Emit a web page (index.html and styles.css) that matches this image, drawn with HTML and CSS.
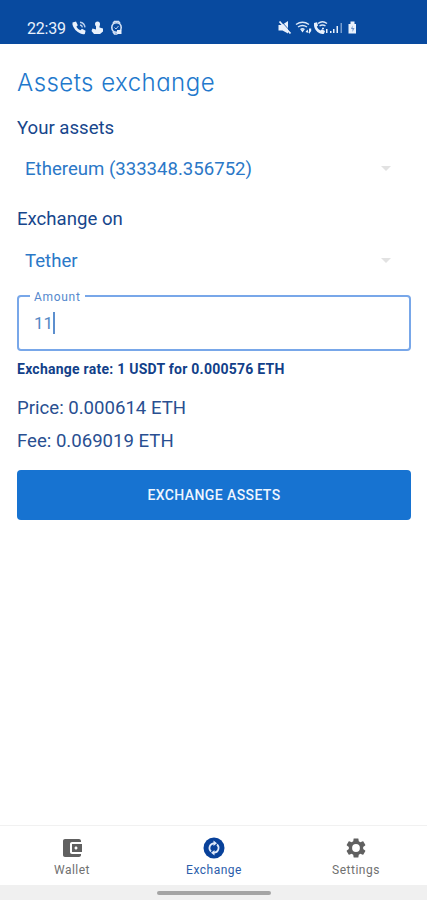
FILE: index.html
```html
<!DOCTYPE html>
<html lang="en">
<head>
<meta charset="utf-8">
<title>Assets exchange</title>
<link rel="stylesheet" href="styles.css">
</head>
<body>
<div class="app">
  <header class="status">
    <span class="clock">22:39</span>
    <svg class="status-left" width="52" height="16" viewBox="0 0 52 16" fill="#e9f1fc">
      <path d="M.5 2.500 4 1.500 5.800 5.200 4.400 6.800Q5.600 9.200 8.400 10.200L10 8.800 13.600 10.800 12.800 14Q11 14.800 8.400 13.500Q2 10.500.5 4.800Z"/>
      <path d="M8 2.200Q12.500 2.800 13 7.400M8 5Q10 5.200 10.400 7.300" fill="none" stroke="#b9cfee" stroke-width="1.400"/>
      <circle cx="25.500" cy="4" r="2.500"/><path d="M24 4h3.500v3.500l3.500 1v3L28 14h-6l-2.500-3 1-2.500 3.500 1z"/>
      <path d="M41 3.500 42.500 1.500h4l1.500 2M41 11.500l1.500 2.500h3" fill="none" stroke="#d3e1f5" stroke-width="1.600"/>
      <circle cx="44.500" cy="7.500" r="4.700" fill="none" stroke="#d3e1f5" stroke-width="1.600"/>
      <path d="M42.500 7.500l1.500 1.500 2.500-3" fill="none" stroke="#b9cfee"/><path d="M45 10h4.500v4H45z"/>
    </svg>
    <svg class="status-right" width="82" height="16" viewBox="0 0 82 16" fill="#e9f1fc">
      <path d="M.5 5H4l6-4v12.500L4.500 10.500H.5z"/><path d="M1.500 1.500l11 12" stroke="#e9f1fc" stroke-width="1.800"/><path d="M4 2l8.500 9.500" stroke="#084a9f" stroke-width=".8"/>
      <g fill="none" stroke="#dce8f8" stroke-width="1.500"><path d="M18 4.500Q24.500 0 31 4.500M20 7Q24.500 4 29 7M22.500 9.500Q24.500 8 26.500 9.500"/></g>
      <path d="M22.500 9.500l2 3 2-3zM27.500 12l2-2.500 1.200 3.500zM31 8.500h2.200v2.500l-2.200 3z"/>
      <path d="M36 3l3-.7 1 3.200-1.200 1.200Q40 9.300 42.500 10.500l1.500-1.200 3 1.700-1 2.700Q43 14.500 39.500 12Q35.500 8.500 36 3z"/>
      <path d="M40 3.500Q44.500 0 49 3.500M41.500 6q3-2 6 0M44 8.500h2" fill="none" stroke="#dce8f8" stroke-width="1.500"/>
      <path d="M48 9h1.500v4H48zM52 11h1.500v2H52zM55 9h1.500v4H55zM58.500 6H60v7h-1.500z"/><path d="M62.500 3H64v10h-1.500z" fill="#769cce"/>
      <path d="M72.500 1.500h4v2.500H78v9.500h-7.500V4h2z"/><path d="M74.500 5.500 73 9h1.500v3l2-4h-2z" fill="#6e94c9"/>
    </svg>
  </header>
  <main class="content">
    <h1 class="title">Assets exchange</h1>
    <div class="label">Your assets</div>
    <div class="select"><span>Ethereum (333348.356752)</span><i class="caret"></i></div>
    <div class="label second">Exchange on</div>
    <div class="select"><span>Tether</span><i class="caret"></i></div>
    <div class="field"><span class="legend">Amount</span><span class="value">11</span><i class="cursor"></i></div>
    <div class="rate">Exchange rate: 1 USDT for 0.000576 ETH</div>
    <div class="price">Price: 0.000614 ETH</div>
    <div class="price fee">Fee: 0.069019 ETH</div>
    <button class="action">EXCHANGE ASSETS</button>
  </main>
  <nav class="tabs">
    <div class="tab">
      <svg width="24" height="24" viewBox="0 0 24 24" fill="#606060"><path d="M21 18v1c0 1.100-.9 2-2 2H5c-1.110 0-2-.9-2-2V5c0-1.100.89-2 2-2h14c1.100 0 2 .9 2 2v1h-9c-1.110 0-2 .9-2 2v8c0 1.100.89 2 2 2h9zm-9-2h10V8H12v8zm4-2.500c-.83 0-1.500-.67-1.500-1.500s.67-1.500 1.500-1.500 1.500.67 1.500 1.500-.67 1.500-1.500 1.500z"/></svg>
      <span>Wallet</span>
    </div>
    <div class="tab active">
      <svg width="24" height="24" viewBox="0 0 24 24"><circle cx="12" cy="12" r="10.500" fill="#08419a"/><g fill="none" stroke="#dfe9fa" stroke-width="1.700"><path d="M9 15.500A4.700 4.700 0 0 1 12 7.300M15 8.500A4.700 4.700 0 0 1 12 16.700"/></g><path d="M11.500 4.500v5.500l3.500-2.700zM12.500 19.500V14L9 16.700z" fill="#dfe9fa"/></svg>
      <span>Exchange</span>
    </div>
    <div class="tab">
      <svg width="24" height="24" viewBox="0 0 24 24" fill="#606060"><path d="M19.140 12.940c.04-.3.060-.61.060-.94 0-.32-.02-.64-.07-.94l2.030-1.580c.18-.14.230-.41.120-.61l-1.920-3.320c-.12-.22-.37-.29-.59-.22l-2.390.96c-.5-.38-1.030-.7-1.620-.94l-.36-2.540c-.04-.24-.24-.41-.48-.41h-3.840c-.24 0-.43.170-.47.410l-.36 2.540c-.59.240-1.130.570-1.620.94l-2.390-.96c-.22-.08-.47 0-.59.220L2.740 8.870c-.12.210-.08.470.12.610l2.030 1.580c-.05.300-.09.630-.09.940s.02.640.07.940l-2.030 1.580c-.18.140-.23.410-.12.610l1.920 3.320c.12.220.37.290.59.220l2.390-.96c.5.380 1.030.7 1.620.94l.36 2.540c.05.240.24.410.48.410h3.840c.24 0 .44-.17.470-.41l.36-2.540c.59-.24 1.130-.56 1.620-.94l2.390.96c.22.080.47 0 .59-.22l1.920-3.320c.12-.22.070-.47-.12-.61l-2.010-1.580zM12 15.900A3.900 3.900 0 1 1 12 8.100a3.900 3.900 0 0 1 0 7.800z"/></svg>
      <span>Settings</span>
    </div>
  </nav>
  <footer class="gesture"><i class="handle"></i></footer>
</div>
</body>
</html>
```
FILE: styles.css
```css
* { box-sizing: border-box; }
body { margin: 0; background: #fff; font-family: Roboto, sans-serif; }
.app { width: 427px; height: 900px; display: flex; flex-direction: column; overflow: hidden; }
.status { height: 44px; flex: none; background: #084a9f; color: #e9f1fc; display: flex; align-items: flex-start; padding: 20px 0 0 27px; }
.clock { width: 45px; font-size: 16px; line-height: 17px; letter-spacing: -.2px; }
.status-left { flex: none; }
.status-right { flex: none; margin-left: 154px; }
.content { flex: 1; padding: 23px 16px 0 17px; display: flex; flex-direction: column; }
.title { margin: 0; height: 32px; line-height: 32px; font-family: Inter, sans-serif; font-feature-settings: "cv11"; font-size: 24px; font-weight: 300; letter-spacing: .47px; color: #2278cc; white-space: nowrap; }
.label { margin-top: 17px; height: 24px; line-height: 24px; font-size: 18.6px; color: #17468c; }
.label.second { margin-top: 26px; }
.select { margin-top: 17px; height: 24px; padding: 0 20px 0 8px; display: flex; align-items: center; justify-content: space-between; font-size: 18.6px; color: #2b78c7; }
.label.second + .select { margin-top: 18px; }
.caret { border: 5px solid transparent; border-top-color: #e2e2e2; border-bottom: 0; margin-bottom: 2px; }
.field { position: relative; flex: none; margin-top: 22px; height: 56px; border: 2px solid #78a7e9; border-radius: 4px; display: flex; align-items: center; padding-left: 15px; }
.legend { position: absolute; left: 11px; top: -7px; padding: 0 4px; background: #fff; font-size: 12px; line-height: 14px; letter-spacing: .7px; color: #5488cd; }
.value { font-size: 17px; color: #5488c4; }
.cursor { width: 2px; height: 22px; background: #5c8fce; }
.rate { margin-top: 8px; height: 20px; line-height: 20px; font-size: 14px; font-weight: 700; letter-spacing: .25px; color: #123f89; white-space: nowrap; }
.price { margin-top: 17px; height: 24px; line-height: 24px; font-size: 18.6px; color: #294f91; }
.price.fee { margin-top: 9px; }
.action { flex: none; margin-top: 17px; height: 50px; border: 0; border-radius: 4px; background: #1773d1; color: #edf5ff; font: 500 14px Roboto, sans-serif; letter-spacing: .4px; }
.tabs { flex: none; height: 60px; border-top: 1px solid #f1f1f1; display: flex; padding-left: 1px; }
.tab { flex: 1; display: flex; flex-direction: column; align-items: center; padding-top: 10px; font-size: 12px; line-height: 16px; letter-spacing: .5px; color: #707070; }
.tab span { margin-top: 2px; }
.tab.active { color: #2b5dab; }
.gesture { flex: none; height: 15px; background: #f0f0f0; display: flex; justify-content: center; padding-top: 6px; }
.handle { width: 114px; height: 4px; border-radius: 2px; background: #a4a4a4; }
```
